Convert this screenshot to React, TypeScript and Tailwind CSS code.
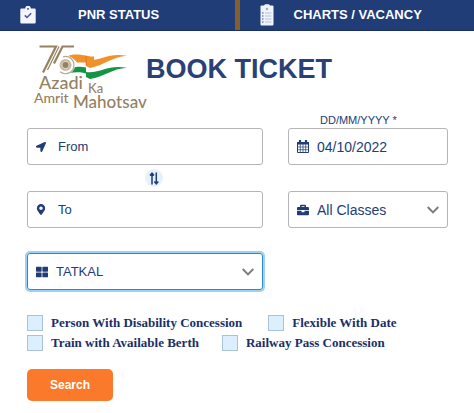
import React from "react";
import { FaBriefcase, FaLocationArrow, FaMapMarkerAlt, FaThLarge } from "react-icons/fa";

function ClipboardCheck() {
  return (
    <svg viewBox="0 0 16 18" className="h-[18px] w-4" aria-hidden="true">
      <path d="M1.5 2.5h3.7a2.8 2.8 0 0 1 5.6 0h3.7a1.2 1.2 0 0 1 1.2 1.2v12.6a1.2 1.2 0 0 1-1.2 1.2h-13a1.2 1.2 0 0 1-1.2-1.2V3.7a1.2 1.2 0 0 1 1.2-1.2z" fill="#f3f5fb" />
      <circle cx="8" cy="2.8" r="0.9" fill="#213d77" />
      <path d="M4.8 9.4l2.2 2.1 4.2-4.2" fill="none" stroke="#4a5d8f" strokeWidth="1.6" />
    </svg>
  );
}

function ChartList() {
  return (
    <svg viewBox="0 0 14 22" className="h-[22px] w-[14px]" aria-hidden="true">
      <path d="M1.5 1.5h2.5l1-1.200h4l1 1.200h2.500a1 1 0 0 1 1 1v18a1 1 0 0 1-1 1h-11a1 1 0 0 1-1-1v-18a1 1 0 0 1 1-1z" fill="#f0f3fb" />
      <circle cx="7" cy="5" r="1.2" fill="#a6a9b5" />
      <path d="M2 9h1.5M2 12h1.5M2 15h1.5M2 18h1.5" stroke="#6f86bd" strokeWidth="1.3" />
      <path d="M5 9h6.500M5 12h6.500M5 15h6.500M5 18h6.500" stroke="#b4c1e0" strokeWidth="1" />
    </svg>
  );
}

function MahotsavLogo() {
  return (
    <svg viewBox="0 0 120 74" className="h-[74px] w-[120px] shrink-0" role="img" aria-label="75 Azadi Ka Amrit Mahotsav">
      <path d="M38 17c6-2.500 11-1.500 18-.5 3 .8 5 1.200 8 1v6H47c-2-3-5-5-9-6.500z" fill="#f0912b" />
      <path d="M42 29c5-1.500 9-1.500 14-.5v6c-5-1.500-10-1.500-17-.5z" fill="#159447" />
      <path d="M56 21c16 1.500 21-7.500 41-4.200-15 1-23 9.700-37 12.200l-4-2z" fill="#f0912b" />
      <path d="M56 33c16 1.500 21-7.500 41-4.200-15 1-23 9-37 11.200l-4-2z" fill="#159447" />
      <path d="M56.200 17v10" stroke="#dc7019" strokeWidth="0.800" />
      <circle cx="35.500" cy="26" r="9.500" fill="#fff" />
      <path d="M33 17.800a8.600 8.600 0 1 1-3 15" fill="none" stroke="#b5a78f" strokeWidth="1.200" />
      <circle cx="35.500" cy="26" r="6" fill="#e0d9cd" />
      <circle cx="35.500" cy="26" r="4.800" fill="none" stroke="#b8a991" strokeWidth="2" strokeDasharray="0.800 0.500" />
      <circle cx="35.500" cy="26" r="3" fill="#94815f" />
      <g fill="none" stroke="#94815f">
        <path d="M9.500 7.500H26L13 33.500" strokeWidth="2.200" />
        <path d="M44 7.500H32.500L24 24.500" strokeWidth="2.200" />
        <path d="M29 7.500L17.500 31" strokeWidth="1.200" />
      </g>
      <g fill="#94815f" fontFamily="Lato, 'Open Sans', sans-serif" fontWeight="500">
        <text x="9" y="50" fontSize="18">Azadi</text>
        <text x="58" y="54" fontSize="13">Ka</text>
        <text x="4" y="64" fontSize="14">Amrit</text>
        <text x="43" y="69" fontSize="17">Mahotsav</text>
      </g>
    </svg>
  );
}

function CalendarGrid() {
  return (
    <svg viewBox="0 0 12 13" className="h-[13px] w-3 shrink-0" aria-hidden="true">
      <path d="M.5 2.500h11v10H.5z" fill="#fff" stroke="#213d77" />
      <path d="M0 2h12v2.500H0z" fill="#213d77" />
      <path d="M3 0v3.500M9 0v3.500" stroke="#213d77" strokeWidth="2.200" />
      <path d="M3.300 4v8.500M6 4v8.500M8.700 4v8.500M.5 7h11M.5 9.700h11" stroke="#213d77" strokeWidth="0.700" />
    </svg>
  );
}

function Chevron() {
  return (
    <svg viewBox="0 0 12 8" className="pointer-events-none h-2 w-3 shrink-0" aria-hidden="true">
      <path d="M.7 1L6 6.500 11.300 1" fill="none" stroke="#7b7b7b" strokeWidth="1.900" />
    </svg>
  );
}

const fieldBox = "flex h-[37px] min-w-0 items-center rounded-[3px] border px-2";
const control = "h-full w-full min-w-0 flex-1 appearance-none bg-transparent text-[#213d77] placeholder:text-[#213d77] outline-none";

function Option({ label }: { label: string }) {
  return (
    <label className="flex items-center gap-2">
      <input type="checkbox" className="size-4 shrink-0 appearance-none border border-[#a9c3d2] bg-[#dceffe] checked:bg-[#213d77]" />
      <span className="whitespace-nowrap">{label}</span>
    </label>
  );
}

export default function App() {
  return (
    <div className="bg-white font-['Liberation_Sans',Arial,sans-serif] text-[#213d77]">
      <nav className="flex border-b border-[#17305f] bg-[#213d77] text-[13px] leading-[30px] font-bold text-white">
        <button type="button" className="flex flex-1 items-center gap-[42px] pl-5">
          <ClipboardCheck />
          PNR STATUS
        </button>
        <span className="w-[5px] bg-[#80602e]" />
        <button type="button" className="flex flex-1 items-center gap-5 pl-5">
          <ChartList />
          CHARTS / VACANCY
        </button>
      </nav>

      <header className="flex h-[78px] items-start pt-2 pl-[30px]">
        <MahotsavLogo />
        <h1 className="-ml-1 pt-3 text-[27px] leading-9 font-bold whitespace-nowrap text-[#2a4178]">BOOK TICKET</h1>
      </header>

      <form className="pr-[26px] pl-[27px]" onSubmit={(e) => e.preventDefault()}>
        <div className="grid grid-cols-[236fr_160fr] gap-x-[25px]">
          <label htmlFor="journey-date" className="col-start-2 pt-1 pl-8 text-[11px] leading-[15px]">
            DD/MM/YYYY *
          </label>

          <div className={`${fieldBox} col-start-1 gap-3 border-[#b5b5b5]`}>
            <FaLocationArrow className="size-[10px] shrink-0" />
            <input aria-label="From" placeholder="From" className={`${control} text-[13px]`} />
          </div>
          <div className={`${fieldBox} gap-2 border-[#b5b5b5]`}>
            <CalendarGrid />
            <input id="journey-date" defaultValue="04/10/2022" className={`${control} text-sm`} />
          </div>

          <div className="col-span-2 col-start-1 grid h-[26px] grid-cols-subgrid">
            <button type="button" aria-label="Swap stations" className="ml-[18px] grid size-[18px] place-items-center self-center justify-self-center rounded-full bg-[#e6f2fb]">
              <svg viewBox="0 0 10 13" className="h-[13px] w-[10px]" aria-hidden="true">
                <path d="M3 12.500V2M1 3.500L3 1.200l2 2.300M7.300.5v10.500M5.300 9.500l2 2.300 2-2.300" fill="none" stroke="#213d77" strokeWidth="1.500" />
              </svg>
            </button>
          </div>

          <div className={`${fieldBox} gap-3 border-[#b5b5b5]`}>
            <FaMapMarkerAlt className="h-[11px] w-[10px] shrink-0" />
            <input aria-label="To" placeholder="To" className={`${control} text-[13px]`} />
          </div>
          <div className={`${fieldBox} gap-2 border-[#b5b5b5]`}>
            <FaBriefcase className="size-3 shrink-0" />
            <select aria-label="Class" className={`${control} text-sm`}>
              <option>All Classes</option>
            </select>
            <Chevron />
          </div>

          <div className={`${fieldBox} mt-[25px] gap-2 border-[#3584c8] ring-2 ring-[#9bd0f7]`}>
            <FaThLarge className="size-3 shrink-0" />
            <select aria-label="Quota" className={`${control} text-[13px]`}>
              <option>TATKAL</option>
            </select>
            <Chevron />
          </div>
        </div>

        <div className="mt-[25px] flex flex-col gap-1 font-['Liberation_Serif','Times_New_Roman',serif] text-[13px] leading-4 font-bold text-[#1a2f68]">
          <div className="flex gap-[26px]">
            <Option label="Person With Disability Concession" />
            <Option label="Flexible With Date" />
          </div>
          <div className="flex gap-[23px]">
            <Option label="Train with Available Berth" />
            <Option label="Railway Pass Concession" />
          </div>
        </div>

        <button type="submit" className="mt-[18px] h-8 rounded-[5px] bg-[#fb792b] px-[23px] text-[12px] font-bold text-white">
          Search
        </button>
      </form>
    </div>
  );
}
